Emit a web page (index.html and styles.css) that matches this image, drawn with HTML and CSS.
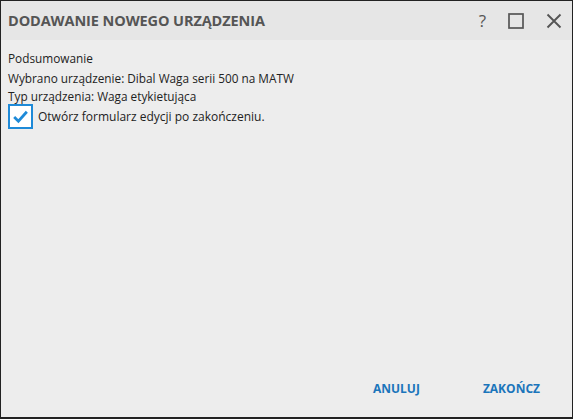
FILE: index.html
```html
<!DOCTYPE html>
<html lang="pl">
<head>
    <meta charset="UTF-8">
    <title>Dodawanie nowego urządzenia</title>
    <link rel="stylesheet" href="styles.css">
</head>
<body>
    <div class="window">
        <div class="title-bar">
            <h1 class="title">DODAWANIE NOWEGO URZĄDZENIA</h1>
            <div class="title-buttons">
                <span class="help">?</span>
                <svg class="icon" width="16" height="16" viewBox="0 0 16 16">
                    <rect x="1" y="1" width="14" height="14" fill="none" stroke="#555" stroke-width="1.7"/>
                </svg>
                <svg class="icon" width="16" height="16" viewBox="0 0 16 16">
                    <path d="M1.5 1.5 L14.5 14.5 M14.5 1.5 L1.5 14.5" stroke="#555" stroke-width="1.9"/>
                </svg>
            </div>
        </div>

        <div class="content">
            <p class="section">Podsumowanie</p>
            <p>Wybrano urządzenie: Dibal Waga serii 500 na MATW</p>
            <p>Typ urządzenia: Waga etykietująca</p>
            <label class="check-row">
                <span class="checkbox">
                    <svg width="19" height="19" viewBox="0 0 18 18">
                        <path d="M3 9.5 L7 13.5 L15 4.5" fill="none" stroke="#1e8ad8" stroke-width="2.6"/>
                    </svg>
                </span>
                Otwórz formularz edycji po zakończeniu.
            </label>
        </div>

        <div class="actions">
            <button class="btn">ANULUJ</button>
            <button class="btn">ZAKOŃCZ</button>
        </div>
    </div>
</body>
</html>
```

FILE: styles.css
```css
* {
    margin: 0;
    padding: 0;
    box-sizing: border-box;
    font-family: 'Open Sans', 'Noto Sans', sans-serif;
}

html, body {
    height: 100%;
}

body {
    background-color: #ededed;
}

.window {
    height: 100%;
    display: flex;
    flex-direction: column;
    border: 1px solid #222;
    border-bottom-width: 2px;
    background-color: #ededed;
}

.title-bar {
    height: 39px;
    background-color: #e6e6e6;
    display: flex;
    align-items: center;
    justify-content: space-between;
    padding: 0 10px 0 7px;
}

.title {
    font-size: 14.5px;
    font-weight: bold;
    color: #555;
    letter-spacing: -0.1px;
}

.title-buttons {
    display: flex;
    align-items: center;
    gap: 22px;
}

.help {
    font-size: 17px;
    color: #555;
    line-height: 16px;
}

.content {
    flex: 1;
    padding: 9px 7px;
    font-size: 11.8px;
    color: #222;
}

.content p {
    line-height: 18px;
}

.content .section {
    margin-bottom: 2px;
}

.check-row {
    display: flex;
    align-items: center;
    gap: 5px;
    margin-top: -1px;
    font-size: 12px;
}

.checkbox {
    width: 25px;
    height: 25px;
    border: 2px solid #1e8ad8;
    background-color: white;
    display: flex;
    align-items: center;
    justify-content: center;
}

.actions {
    display: flex;
    justify-content: flex-end;
    gap: 47px;
    padding: 0 24px 16px 0;
}

.btn {
    border: none;
    background: none;
    font-size: 12px;
    font-weight: bold;
    color: #1b75bb;
    cursor: pointer;
    padding: 4px 8px;
}
```
